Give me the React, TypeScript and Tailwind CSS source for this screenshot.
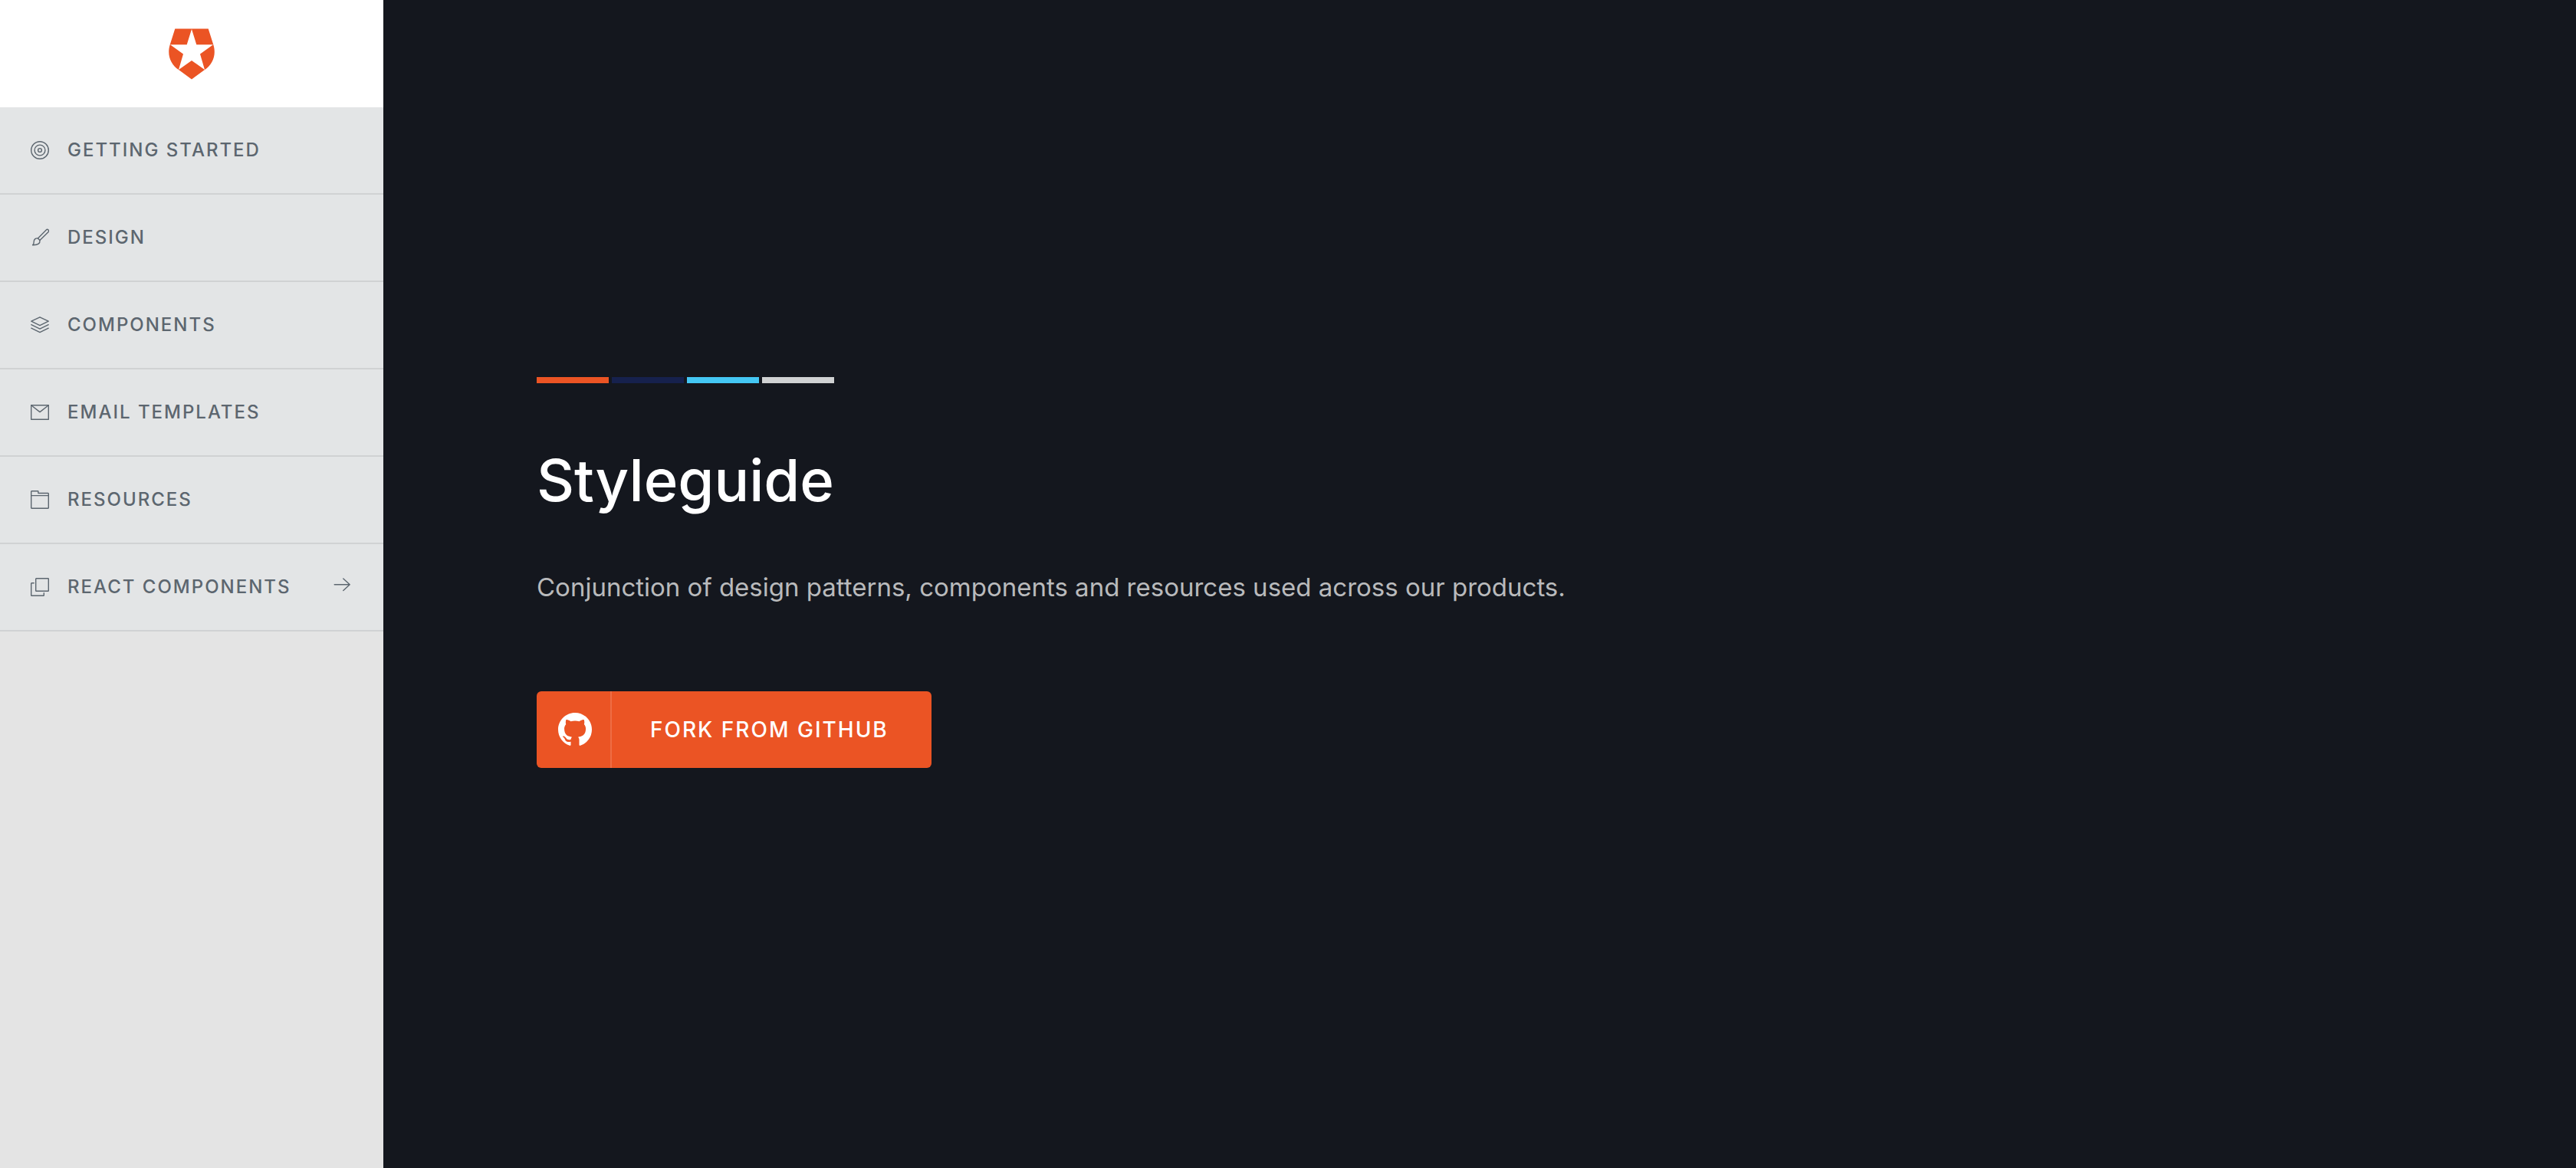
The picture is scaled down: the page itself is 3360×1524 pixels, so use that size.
import type { ReactNode } from "react";

function Icon({ children }: { children: ReactNode }) {
  return (
    <svg
      viewBox="0 0 24 24"
      className="size-6 shrink-0"
      fill="none"
      stroke="currentColor"
      strokeWidth="1.4"
      strokeLinecap="round"
      strokeLinejoin="round"
      aria-hidden="true"
    >
      {children}
    </svg>
  );
}

const TargetIcon = (
  <Icon>
    <circle cx="12" cy="12" r="11.3" />
    <circle cx="12" cy="12" r="6.9" />
    <circle cx="12" cy="12" r="2.4" />
  </Icon>
);

const BrushIcon = (
  <Icon>
    <path d="M9.400 12.900 20.300 2a1.900 1.900 0 0 1 2.700 2.700L12 15.600" />
    <path d="M9.400 12.900 12 15.600c.4 3.800-2 6.300-9.400 6.100 1.500-.9 1.600-2.200 1.600-4.200 0-3.100 2.200-5 5.200-4.600Z" />
  </Icon>
);

const LayersIcon = (
  <Icon>
    <path d="M12 1.800 23.200 7.200 12 12.600.8 7.200Z" />
    <path d="M.8 11.700 12 17.100l11.200-5.400" />
    <path d="M.8 16.200 12 21.600l11.200-5.400" />
  </Icon>
);

const MailIcon = (
  <Icon>
    <path d="M.7 2.800h22.600v18.500H.7Z" />
    <path d="m1 3 11 8.600L23 3" />
  </Icon>
);

const FolderIcon = (
  <Icon>
    <path d="M.7 22.300v-21a.6.6 0 0 1 .6-.6h8a.6.6 0 0 1 .6.6v2.200h12.800a.6.6 0 0 1 .6.600v18.600a.6.6 0 0 1-.6.600H1.300a.6.6 0 0 1-.6-.6Z" />
    <path d="M.7 6.600h22.600" />
  </Icon>
);

const CopyIcon = (
  <Icon>
    <rect x="6.700" y=".7" width="16.600" height="16.600" rx=".6" />
    <path d="M4.200 6.700H1.300a.6.6 0 0 0-.6.600v15.400a.6.6 0 0 0 .6.600h15.400a.6.6 0 0 0 .6-.6v-2.900" />
  </Icon>
);

const ArrowIcon = (
  <Icon>
    <path d="M2.200 8.700h20M13.800.9l8.400 7.800-8.400 7.800" />
  </Icon>
);

const items = [
  { label: "Getting started", icon: TargetIcon },
  { label: "Design", icon: BrushIcon },
  { label: "Components", icon: LayersIcon },
  { label: "Email templates", icon: MailIcon },
  { label: "Resources", icon: FolderIcon },
  { label: "React components", icon: CopyIcon, trailing: ArrowIcon },
];

const swatches = ["bg-[#eb5424]", "bg-[#16214d]", "bg-[#44c7f4]", "bg-[#d0d2d3]"];

function Logo() {
  return (
    <svg viewBox="0 0 60 67" className="h-[67px] w-[60px]" aria-hidden="true">
      <path
        fill="#eb5424"
        d="M8.300.5H51.700L58.200 21C62.400 34 58 46.500 47 54L30 66.500 13 54C2 46.500-2.400 34 1.800 21Z"
      />
      <path
        fill="#fff"
        d="M30 1 36.300 21.300H58L41 33.600 47 54 30 42 13 54 19 33.600 2 21.300H23.700Z"
      />
    </svg>
  );
}

function GithubMark() {
  return (
    <svg viewBox="0 0 16 16" className="size-11" fill="currentColor" aria-hidden="true">
      <path d="M8 0C3.580 0 0 3.580 0 8c0 3.540 2.290 6.530 5.470 7.590.4.070.55-.17.55-.38 0-.19-.01-.82-.01-1.490-2.010.37-2.530-.49-2.690-.94-.09-.23-.48-.94-.82-1.130-.28-.15-.68-.52-.01-.53.63-.01 1.080.58 1.230.82.72 1.210 1.870.87 2.330.66.07-.52.28-.87.51-1.070-1.780-.2-3.640-.89-3.640-3.950 0-.87.31-1.590.82-2.150-.08-.2-.36-1.020.08-2.120 0 0 .67-.21 2.200.82.64-.18 1.320-.27 2-.27s1.360.09 2 .27c1.530-1.040 2.200-.82 2.200-.82.44 1.100.16 1.920.08 2.120.51.56.82 1.270.82 2.150 0 3.070-1.870 3.750-3.650 3.950.29.25.54.73.54 1.480 0 1.070-.01 1.930-.01 2.200 0 .21.15.46.55.38A8.010 8.010 0 0 0 16 8c0-4.420-3.580-8-8-8Z" />
    </svg>
  );
}

export default function App() {
  return (
    <div className="flex min-h-screen bg-[#14171e] font-['Inter',sans-serif]">
      <aside className="w-[500px] shrink-0 bg-[#e4e4e4]">
        <a href="#" aria-label="Home" className="flex h-[140px] items-center justify-center bg-white">
          <Logo />
        </a>
        <nav>
          <ul>
            {items.map((item) => (
              <li key={item.label} className="border-b-2 border-[#d0d2d3] bg-[#e3e5e6]">
                <a href="#" className="flex h-28 items-center gap-6 pr-[42px] pl-10 text-[#5c666f]">
                  {item.icon}
                  <span className="grow text-2xl font-medium tracking-[2px] whitespace-nowrap uppercase">
                    {item.label}
                  </span>
                  {item.trailing}
                </a>
              </li>
            ))}
          </ul>
        </nav>
      </aside>
      <main className="flex grow flex-col items-start justify-center px-[200px] pb-[30px]">
        <div className="flex gap-1">
          {swatches.map((color) => (
            <span key={color} className={`h-2 w-[94px] ${color}`} />
          ))}
        </div>
        <h1 className="mt-20 text-[76px] leading-[92px] font-medium text-white">Styleguide</h1>
        <p className="mt-16 text-[33px] leading-[60px] text-[#b9babc]">
          Conjunction of design patterns, components and resources used across our products.
        </p>
        <a
          href="#"
          className="mt-[106px] flex h-[100px] items-center rounded-md bg-[#eb5424] text-white"
        >
          <span className="flex h-full items-center border-r-2 border-white/15 pr-6 pl-7">
            <GithubMark />
          </span>
          <span className="pr-14 pl-[50px] text-[28px] font-medium tracking-[2px] whitespace-nowrap uppercase">
            Fork from Github
          </span>
        </a>
      </main>
    </div>
  );
}
